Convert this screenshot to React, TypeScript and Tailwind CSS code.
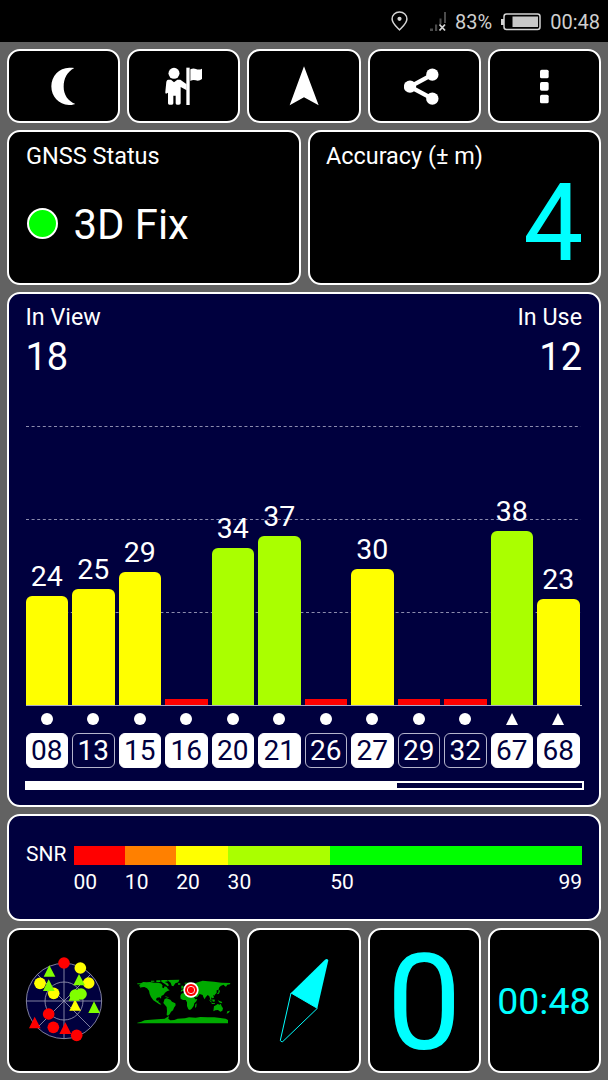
import type { ReactNode } from 'react';
import clsx from 'clsx';

interface Satellite {
  id: string;
  snr: number | null;
  height: number;
  inUse: boolean;
  kind: 'gps' | 'glonass';
}

const satellites: Satellite[] = [
  { id: '08', snr: 24, height: 109, inUse: true, kind: 'gps' },
  { id: '13', snr: 25, height: 116, inUse: false, kind: 'gps' },
  { id: '15', snr: 29, height: 133, inUse: true, kind: 'gps' },
  { id: '16', snr: null, height: 6, inUse: true, kind: 'gps' },
  { id: '20', snr: 34, height: 157, inUse: true, kind: 'gps' },
  { id: '21', snr: 37, height: 169, inUse: true, kind: 'gps' },
  { id: '26', snr: null, height: 6, inUse: false, kind: 'gps' },
  { id: '27', snr: 30, height: 136, inUse: true, kind: 'gps' },
  { id: '29', snr: null, height: 6, inUse: false, kind: 'gps' },
  { id: '32', snr: null, height: 6, inUse: false, kind: 'gps' },
  { id: '67', snr: 38, height: 174, inUse: true, kind: 'glonass' },
  { id: '68', snr: 23, height: 106, inUse: true, kind: 'glonass' },
];

const scale = [
  { label: '00', span: 10, color: 'bg-[#ff0000]' },
  { label: '10', span: 10, color: 'bg-[#ff8000]' },
  { label: '20', span: 10, color: 'bg-[#ffff00]' },
  { label: '30', span: 20, color: 'bg-[#aaff00]' },
  { label: '50', span: 49, color: 'bg-[#00ff00]' },
];

function barColor(snr: number | null) {
  if (snr === null) return 'bg-[#ff0000]';
  if (snr > 30) return 'rounded-t-[6px] bg-[#aaff00]';
  return 'rounded-t-[6px] bg-[#ffff00]';
}

function Panel({ className, children }: { className?: string; children: ReactNode }) {
  return (
    <div className={clsx('rounded-[13px] border-2 border-white', className)}>
      {children}
    </div>
  );
}

function StatusBar() {
  return (
    <div className="flex h-[42px] items-center justify-end bg-black pt-[2px] pr-[8px] text-[20px] leading-[24px] text-[#cfcfcf]">
      <svg className="-mt-[2px] mr-[22px] h-[20px] w-[17px]" viewBox="0 0 17 20" fill="none">
        <path d="M8.5 1C4.3 1 1.1 4.1 1.1 8c0 4.600 5.200 8.400 7.400 10.800C10.700 16.400 15.900 12.600 15.900 8c0-3.900-3.200-7-7.400-7z" stroke="#d4d4d4" strokeWidth="1.500" />
        <circle cx="8.500" cy="7.800" r="2.100" fill="#d4d4d4" />
      </svg>
      <svg className="-mt-[1px] mr-[8px] h-[20px] w-[17px]" viewBox="0 0 17 20">
        <path d="M0 16.500h3V19H0zM5 12.500h2.200V19H5zM9.500 6.500h2V12h-2zM14 0h2v11h-2z" fill="#4b4b4b" />
        <path d="M9.500 12.500l5.500 6M15 12.500l-5.500 6" stroke="#d8d8d8" strokeWidth="1.800" />
      </svg>
      <span>83%</span>
      <svg className="-mt-[1px] mr-[9px] ml-[9px] h-[18px] w-[40px]" viewBox="0 0 40 18" fill="none">
        <rect x="3" y="1" width="36" height="15.500" rx="2.500" stroke="#d4d4d4" strokeWidth="1.500" />
        <path d="M0 6h3v6H0z" fill="#d4d4d4" />
        <path d="M11.500 3.500H37V14H11.500z" fill="#c8c8c8" />
      </svg>
      <span>00:48</span>
    </div>
  );
}

function MoonIcon() {
  return (
    <svg className="size-[40px]" viewBox="131 78 120 120" fill="#fff">
      <path d="M222 84C200 96 190 116 190 140c0 24 12 42 35 52-9 3-14 3-19 3-31-1-53-25-53-56s23-55 54-56c6 0 11 0 15 1z" />
    </svg>
  );
}

function GuideIcon() {
  return (
    <svg className="size-[40px]" viewBox="492 78 120 120" fill="#fff">
      <circle cx="522" cy="100" r="16.500" />
      <path d="M504 119h9l9 8 10-8h9l19 14v18l-18-10v49q0 4-5 4h-6q-4 0-4-4v-23h-7v23q0 4-4 4h-8q-4 0-4-4v-32l-6 3q-3-1-2-6l3-30q2-6 5-6z" />
      <path d="M559 83h10v112h-10z" />
      <path d="M571 88q9-5 17-1 8 4 18-1v31q-10 8-19 4-8-3-16 2z" />
    </svg>
  );
}

function ShareIcon() {
  return (
    <svg className="size-[40px]" viewBox="492 78 120 120" fill="#fff">
      <path d="M577 104l-67 36 67 36" fill="none" stroke="#fff" strokeWidth="13" />
      <circle cx="510" cy="140" r="18.500" />
      <circle cx="577" cy="104" r="18.500" />
      <circle cx="577" cy="176" r="18.500" />
    </svg>
  );
}

function SkyPlot() {
  return (
    <svg className="size-[80px] overflow-visible" viewBox="71 121 240 240">
      <g stroke="#9a9ab4" strokeWidth="2.500" fill="none">
        <circle cx="191" cy="241" r="113" fill="#00003e" />
        <circle cx="191" cy="241" r="57" />
        <path d="M78 241h226M191 128v226M111 321L271 161M111 161l160 160" />
      </g>
      <g fill="#ff0000">
        <circle cx="191" cy="127" r="17.500" />
        <circle cx="145" cy="280" r="17.500" />
        <circle cx="159" cy="320" r="17.500" />
        <circle cx="229" cy="344" r="17.500" />
        <path d="M103 288l18 35H86zM195 305l18 35h-36z" />
      </g>
      <g fill="#ffff00">
        <circle cx="240" cy="142" r="17.500" />
        <circle cx="265" cy="187" r="17.500" />
        <circle cx="119" cy="188" r="17.500" />
        <circle cx="160" cy="218" r="17.500" />
        <path d="M224 236l18 34h-35z" />
      </g>
      <g fill="#80ff00">
        <circle cx="225" cy="223" r="17.500" />
        <circle cx="242" cy="220" r="17.500" />
        <path d="M147 134l18 34h-35zM145 176l18 35h-35zM236 160l18 34h-35zM222 206l17 34h-34zM281 242l18 35h-35z" />
      </g>
    </svg>
  );
}

function WorldMap() {
  return (
    <svg className="h-[50px] w-[100px]" viewBox="26 166 300 150">
      <g fill="#00aa00">
        {/* North America, arctic islands and Greenland */}
        <path d="M48 187l6-3 10 1 10-1 12 2 14 0 8 3 4 6-2 5 5 3 3-6 6 2 4 6 5 4-8 3-6 4-4 6-7 4-1 8-4-4-8 1-3 5 3 5 5-2-1 5 5 3 4 5-6-1-9-6-9-6-7-10-4-9-2-10-6-7-8-4-8 1-6 3 3-4-5-3z" />
        <path d="M77 180h10v3H77zM93 179h12v5H93zM108 178l18 0 2 4-10 2 8 3 5 7-4 3-7-6-6-4-6-4zM128 178l34-1-3 8-9 3-6 9-5-2-3-9-7-5zM36 188h12v3H36zM158 188h7v4h-7zM118 226l10 3 3 3-8-2z" />
        {/* South America */}
        <path d="M118 235l6-2 11 4 5 6 10 5 1 6-5 7-3 8-6 4-4 8-5 4-4-2 1-12-1-12-5-6-5-6z" />
        {/* Europe and Asia */}
        <path d="M166 214l2-7 8-1 2-9 7-8 8-4 5 5 14-3 8-3 12-4 16 2 18 1 22 3 27 1-1 4-8 1-4 6-4-2-3-4-8 3-5 5-3 8-5 1 0 8-4 4-6 3 2 7-5 2-4-3 2 10-4-3-3-10-5-4-6 7-3 6-4-7-2-6-9-3-6 8-6 3-5-10-3-6-9-1-7-4-4 2-6-4z" />
        <path d="M178 186h10v3h-10zM168 195h6l1 8-7 1zM280 206l4 5-3 8-7 2 5-6z" />
        {/* Africa */}
        <path d="M168 219l9-3 9 1 4 3 11 0 5 9 4 7 6-1-3 7-6 6-2 8-6 8-5 4-5-2-4-10 0-11-4-7-8 0-7-4-1-8zM210 251l4-3-1 10-4 4z" />
        {/* Indonesia and Oceania */}
        <path d="M250 236l7 5 4 5-5-2zM261 236l8 1-2 7-6-2zM259 247l10 1v2h-10zM277 239l12 4 2 5-8-2zM266 257l7-4 4-3 6 2 3-3 3 8 4 6-2 7-6 3-7-5-8 1-6 3zM306 272l8-2-4 6-6 3zM264 219l4 0 1 6-4-2z" />
        {/* Antarctica */}
        <path d="M36 306l12-3 10-4 18-2 20-1 22-2 8-5 5-3-2 8 6 5 12-1 10-4 22-1 12-3 20 1 14-2 22 1 20 0 18 2 16 2 7 4v10H36z" />
      </g>
      <circle cx="197" cy="208" r="23" fill="#fff" />
      <circle cx="197" cy="208" r="18" fill="#ff0000" />
      <circle cx="197" cy="208" r="11" fill="none" stroke="#fff" strokeWidth="2.500" />
    </svg>
  );
}

function CompassIcon() {
  return (
    <svg className="h-[93.333px] w-[60px]" viewBox="102 101 180 280">
      <path d="M153 218L255 118q6-5 10 2l-33 144z" fill="#00ffff" />
      <path d="M153 218l-32 142q1 5 7 4L232 264z" fill="none" stroke="#00ffff" strokeWidth="3" />
    </svg>
  );
}

function GridLine() {
  return (
    <svg className="h-px w-full shrink-0">
      <line x1="0" y1="0.500" x2="554.500" y2="0.500" stroke="#8c8cae" strokeDasharray="3 2.600" />
    </svg>
  );
}

function SatelliteChart() {
  return (
    <Panel className="h-[515px] bg-[#00003e] pt-[11px] pr-[17px] pl-[16.500px]">
      <div className="flex justify-between">
        <div>
          <div className="text-[23.300px] leading-[24px]">In View</div>
          <div className="mt-[8px] text-[38px] leading-[40px]">18</div>
        </div>
        <div className="text-right">
          <div className="text-[23.300px] leading-[24px]">In Use</div>
          <div className="mt-[8px] text-[38px] leading-[40px]">12</div>
        </div>
      </div>

      <div className="relative h-[329px] w-[556px] border-b border-[#a9a9c4]">
        <div className="absolute inset-x-0 bottom-0 flex h-[279px] flex-col justify-between pb-[92px]">
          <GridLine />
          <GridLine />
          <GridLine />
        </div>
        <div className="relative flex h-full w-[554px] items-end gap-[4px]">
          {satellites.map((sat) => (
            <div key={sat.id} className="flex flex-1 flex-col items-center">
              {sat.snr !== null && (
                <span className="mb-[1px] text-[28.500px] leading-[36px]">{sat.snr}</span>
              )}
              <div className={clsx('w-full', barColor(sat.snr))} style={{ height: sat.height }} />
            </div>
          ))}
        </div>
      </div>

      <div className="mt-[7px] flex w-[554px] gap-[4px]">
        {satellites.map((sat) => (
          <div key={sat.id} className="flex flex-1 flex-col items-center gap-[8px]">
            <svg className="size-[12px]" viewBox="0 0 12 12" fill="#fff">
              {sat.kind === 'gps' ? <circle cx="6" cy="6" r="6" /> : <path d="M6 0l6 12H0z" />}
            </svg>
            <div
              className={clsx(
                'flex h-[35px] w-full items-center justify-center rounded-[6px] border text-[28px] leading-[33px]',
                sat.inUse ? 'border-white bg-white text-[#00003e]' : 'border-[#b4b4cc] text-white',
              )}
            >
              {sat.id}
            </div>
          </div>
        ))}
      </div>

      <div className="mt-[13px] -ml-[1px] h-[9px] w-[559px] border-2 border-white">
        <div className="h-full w-2/3 bg-white" />
      </div>
    </Panel>
  );
}

function SnrLegend() {
  return (
    <Panel className="h-[107px] bg-[#00003e] px-[17px] pt-[30px] text-[21px] leading-[24px]">
      <div className="flex">
        <span className="-mt-[4px] w-[47.500px]">SNR</span>
        <div className="flex-1">
          <div className="flex h-[19px]">
            {scale.map((step) => (
              <div key={step.label} className={step.color} style={{ flex: `${step.span} 1 0` }} />
            ))}
          </div>
          <div className="mt-[5px] flex">
            {scale.map((step) => (
              <div key={step.label} className="flex justify-between" style={{ flex: `${step.span} 1 0` }}>
                <span>{step.label}</span>
                {step.label === '50' && <span>99</span>}
              </div>
            ))}
          </div>
        </div>
      </div>
    </Panel>
  );
}

export default function App() {
  const button = 'flex h-[74px] items-center justify-center bg-black';
  const tile = 'flex h-[145px] items-center justify-center bg-black';

  return (
    <div className="h-[1080px] w-[608px] overflow-hidden bg-[#626262] font-['Roboto',sans-serif] text-white">
      <StatusBar />
      <div className="flex flex-col gap-[7px] pt-[7px] pr-[7px] pl-[7px]">
        <div className="grid grid-cols-5 gap-[7px]">
          <Panel className={button}>
            <MoonIcon />
          </Panel>
          <Panel className={button}>
            <GuideIcon />
          </Panel>
          <Panel className={button}>
            <svg className="size-[40px]" viewBox="132 78 120 120" fill="#fff">
              <path d="M192 79l44 117-44-24-43 24z" />
            </svg>
          </Panel>
          <Panel className={button}>
            <ShareIcon />
          </Panel>
          <Panel className={button}>
            <svg className="size-[40px]" viewBox="852 78 120 120" fill="#fff">
              <rect x="900" y="89" width="26" height="26" rx="5" />
              <rect x="900" y="126" width="26" height="26" rx="5" />
              <rect x="900" y="164" width="26" height="26" rx="5" />
            </svg>
          </Panel>
        </div>

        <div className="grid grid-cols-2 gap-[7px]">
          <Panel className="h-[155px] bg-black px-[17px] pt-[12px]">
            <div className="text-[23.500px] leading-[24px]">GNSS Status</div>
            <div className="mt-[35px] flex items-center">
              <div className="-mt-[4px] ml-[1px] size-[31px] rounded-full border-2 border-white bg-[#00ff00]" />
              <span className="ml-[15.500px] text-[41.800px] leading-[44px]">3D Fix</span>
            </div>
          </Panel>
          <Panel className="h-[155px] bg-black px-[16.500px] pt-[12px]">
            <div className="text-[23.400px] leading-[24px]">Accuracy (± m)</div>
            <div className="mt-[2px] -mr-[1px] text-right text-[107px] leading-[108px] text-[#00ffff]">4</div>
          </Panel>
        </div>

        <SatelliteChart />
        <SnrLegend />

        <div className="grid grid-cols-5 gap-[7px]">
          <Panel className={tile}>
            <SkyPlot />
          </Panel>
          <Panel className={tile}>
            <WorldMap />
          </Panel>
          <Panel className={tile}>
            <CompassIcon />
          </Panel>
          <Panel className={tile}>
            <span className="pt-[5px] text-[133px] leading-none text-[#00ffff]">0</span>
          </Panel>
          <Panel className={tile}>
            <span className="-ml-[1px] text-[37.500px] leading-[44px] text-[#00ffff]">00:48</span>
          </Panel>
        </div>
      </div>
    </div>
  );
}
